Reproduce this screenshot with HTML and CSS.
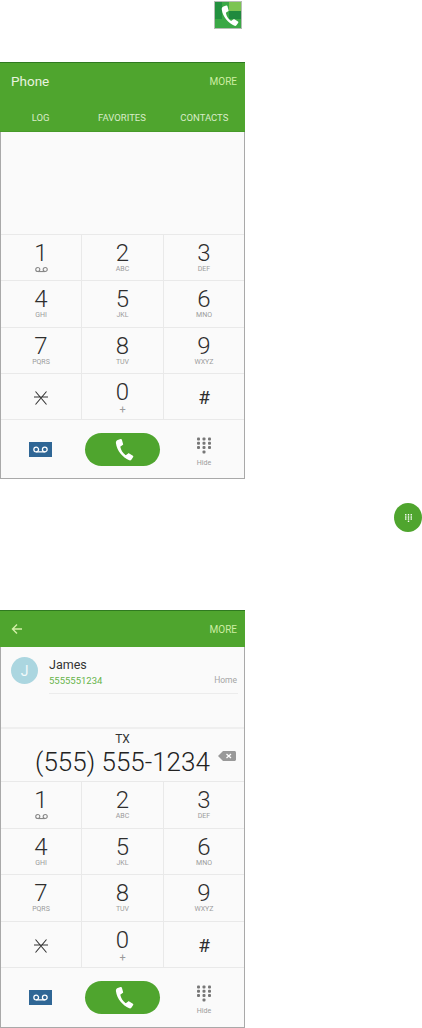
FILE: index.html
```html
<!DOCTYPE html>
<html lang="en">
<head>
    <meta charset="UTF-8">
    <meta name="viewport" content="width=device-width, initial-scale=1.0">
    <title>Phone</title>
    <link rel="stylesheet" href="styles.css">
</head>
<body>
    <svg class="defs" width="0" height="0" aria-hidden="true">
        <symbol id="handset" viewBox="0 0 24 24">
            <path d="M6.200 1.600 9.400 0.600c.7-.2 1.200.1 1.400.7l1.300 4.600c.2.600 0 1-.5 1.300L9.300 8.600c-.2.200-.3.400-.2.700.7 3.500 2.700 6.600 5.500 8.700.2.200.5.200.7 0l2-1.500c.5-.4 1-.4 1.500-.1l4 2.500c.5.300.6.800.3 1.300l-1.800 2.700c-.6.900-1.500 1.200-2.500.9C11.500 20.500 5.400 13.500 4.300 5.200 4.100 3.500 4.700 2.100 6.200 1.600Z"/>
        </symbol>
        <symbol id="pad" viewBox="0 0 14 16">
            <rect x="0" y="0" width="3" height="3" rx="1"/><rect x="5.500" y="0" width="3" height="3" rx="1"/><rect x="11" y="0" width="3" height="3" rx="1"/>
            <rect x="0" y="4.300" width="3" height="3" rx="1"/><rect x="5.500" y="4.300" width="3" height="3" rx="1"/><rect x="11" y="4.300" width="3" height="3" rx="1"/>
            <rect x="0" y="8.600" width="3" height="3" rx="1"/><rect x="5.500" y="8.600" width="3" height="3" rx="1"/><rect x="11" y="8.600" width="3" height="3" rx="1"/>
            <rect x="5.500" y="13" width="3" height="3" rx="1"/>
        </symbol>
        <symbol id="vm-small" viewBox="0 0 14 6">
            <circle cx="3" cy="3" r="2.200" fill="none" stroke="currentColor" stroke-width="1.200"/>
            <circle cx="11" cy="3" r="2.200" fill="none" stroke="currentColor" stroke-width="1.200"/>
            <path d="M3 5.200h8" fill="none" stroke="currentColor" stroke-width="1.200"/>
        </symbol>
        <symbol id="star" viewBox="0 0 14 14">
            <path d="M0 6h14M1.500 .5l11 13M12.500 .5l-11 13" fill="none" stroke="#333" stroke-width="1.100"/>
        </symbol>
    </svg>

    <div class="app-icon-row">
        <div class="app-icon">
            <div class="tile tile-a"></div>
            <div class="tile tile-b"></div>
            <div class="tile tile-c"></div>
            <svg class="app-handset"><use href="#handset"/></svg>
        </div>
    </div>

    <!-- Tela 1 -->
    <div class="phone phone-first">
        <div class="appbar appbar-tall">
            <div class="appbar-top">
                <span class="title">Phone</span>
                <span class="more">MORE</span>
            </div>
            <div class="tabs">
                <span>LOG</span>
                <span>FAVORITES</span>
                <span>CONTACTS</span>
            </div>
        </div>
        <div class="blank"></div>
        <div class="keypad">
            <div class="key"><span class="num">1</span><svg class="vm-small"><use href="#vm-small"/></svg></div>
            <div class="key"><span class="num">2</span><span class="sub">ABC</span></div>
            <div class="key"><span class="num">3</span><span class="sub">DEF</span></div>
            <div class="key"><span class="num">4</span><span class="sub">GHI</span></div>
            <div class="key"><span class="num">5</span><span class="sub">JKL</span></div>
            <div class="key"><span class="num">6</span><span class="sub">MNO</span></div>
            <div class="key"><span class="num">7</span><span class="sub">PQRS</span></div>
            <div class="key"><span class="num">8</span><span class="sub">TUV</span></div>
            <div class="key"><span class="num">9</span><span class="sub">WXYZ</span></div>
            <div class="key"><svg class="star"><use href="#star"/></svg></div>
            <div class="key"><span class="num">0</span><span class="sub plus">+</span></div>
            <div class="key"><span class="num hash">#</span></div>
        </div>
        <div class="actions">
            <div class="vm-btn"><svg class="vm-icon"><use href="#vm-small"/></svg></div>
            <div class="call-btn"><svg class="call-handset"><use href="#handset"/></svg></div>
            <div class="hide-btn"><svg class="pad-icon"><use href="#pad"/></svg><span>Hide</span></div>
        </div>
    </div>

    <div class="dial-icon-row">
        <div class="dial-icon"><svg class="dial-pad"><use href="#pad"/></svg></div>
    </div>

    <!-- Tela 2 -->
    <div class="phone phone-second">
        <div class="appbar appbar-short">
            <svg class="back" viewBox="0 0 12 12"><path d="M11 6H2M6 1.500 1.500 6 6 10.500" fill="none" stroke="#d3f0a8" stroke-width="1.400"/></svg>
            <span class="more">MORE</span>
        </div>
        <div class="contact-area">
            <div class="contact">
                <div class="avatar">J</div>
                <div class="contact-info">
                    <div class="contact-name">James</div>
                    <div class="contact-line">
                        <span class="contact-num">5555551234</span>
                        <span class="contact-type">Home</span>
                    </div>
                </div>
            </div>
        </div>
        <div class="number-area">
            <div class="region">TX</div>
            <div class="number">(555) 555-1234</div>
            <svg class="backspace" viewBox="0 0 18 10"><path d="M5 0h11.500c.8 0 1.500.7 1.500 1.500v7c0 .8-.7 1.500-1.500 1.500H5L0 5Z" fill="#999"/><path d="M8.500 3l4.500 4M13 3 8.500 7" stroke="#fff" stroke-width="1.300"/></svg>
        </div>
        <div class="keypad">
            <div class="key"><span class="num">1</span><svg class="vm-small"><use href="#vm-small"/></svg></div>
            <div class="key"><span class="num">2</span><span class="sub">ABC</span></div>
            <div class="key"><span class="num">3</span><span class="sub">DEF</span></div>
            <div class="key"><span class="num">4</span><span class="sub">GHI</span></div>
            <div class="key"><span class="num">5</span><span class="sub">JKL</span></div>
            <div class="key"><span class="num">6</span><span class="sub">MNO</span></div>
            <div class="key"><span class="num">7</span><span class="sub">PQRS</span></div>
            <div class="key"><span class="num">8</span><span class="sub">TUV</span></div>
            <div class="key"><span class="num">9</span><span class="sub">WXYZ</span></div>
            <div class="key"><svg class="star"><use href="#star"/></svg></div>
            <div class="key"><span class="num">0</span><span class="sub plus">+</span></div>
            <div class="key"><span class="num hash">#</span></div>
        </div>
        <div class="actions">
            <div class="vm-btn"><svg class="vm-icon"><use href="#vm-small"/></svg></div>
            <div class="call-btn"><svg class="call-handset"><use href="#handset"/></svg></div>
            <div class="hide-btn"><svg class="pad-icon"><use href="#pad"/></svg><span>Hide</span></div>
        </div>
    </div>
</body>
</html>
```

FILE: styles.css
```css
body {
    font-family: Roboto, "Liberation Sans", sans-serif;
    margin: 0;
    padding: 0;
    background-color: #fff;
    color: #333;
}

.defs {
    display: block;
    height: 0;
}

.app-icon-row {
    display: flex;
    padding: 1px 0 0 214px;
    height: 28px;
}

.app-icon {
    position: relative;
    box-sizing: border-box;
    width: 28px;
    height: 28px;
    background-color: #3aa845;
    border: 1px solid #b5bdb5;
    overflow: hidden;
}

.tile {
    position: absolute;
}

.tile-a {
    top: 0;
    right: 0;
    width: 12px;
    height: 9px;
    background-color: #7cc452;
}

.tile-b {
    top: 9px;
    right: 0;
    width: 12px;
    height: 8px;
    background-color: #1f8a3e;
}

.tile-c {
    top: 0;
    left: 0;
    width: 7px;
    height: 17px;
    background-color: #22913f;
}

.app-handset {
    position: absolute;
    left: 3px;
    top: 3px;
    width: 21px;
    height: 21px;
    fill: #fff;
}

.phone {
    box-sizing: border-box;
    width: 245px;
    background-color: #fafafa;
    border-left: 1px solid #a9a9a9;
    border-right: 1px solid #a9a9a9;
    border-bottom: 1px solid #a9a9a9;
    display: flex;
    flex-direction: column;
}

.phone-first {
    margin-top: 33px;
    height: 417px;
}

.phone-second {
    margin-top: 78px;
    height: 418px;
}

.appbar {
    background-color: #4fa52e;
    border-top: 1px solid #2f7a20;
    margin: 0 -1px;
    flex-shrink: 0;
}

.appbar-tall {
    height: 70px;
    box-sizing: border-box;
    border-bottom: 1px solid #479a2a;
}

.appbar-top {
    display: flex;
    justify-content: space-between;
    align-items: center;
    padding: 10px 8px 0 11px;
}

.appbar-short {
    height: 37px;
    box-sizing: border-box;
    display: flex;
    justify-content: space-between;
    align-items: center;
    padding: 0 8px 0 11px;
}

.title {
    font-size: 13.500px;
    color: #e8f3df;
}

.more {
    font-size: 10px;
    color: #cdeea3;
}

.tabs {
    display: flex;
    margin-top: 23px;
    font-size: 9.500px;
    color: #d9ecc9;
}

.tabs span {
    flex: 1;
    text-align: center;
}

.tabs span:last-child {
    padding-left: 1px;
}

.blank {
    flex: 1;
}

.keypad {
    display: grid;
    grid-template-columns: 81px 82px 1fr;
    grid-auto-rows: 46.250px;
    flex-shrink: 0;
    border-top: 1px solid #e9e9e9;
}

.phone-second .keypad {
    grid-auto-rows: 46.500px;
}

.key {
    display: flex;
    flex-direction: column;
    align-items: center;
    justify-content: flex-start;
    padding-top: 6px;
    box-sizing: border-box;
    border-right: 1px solid #e9e9e9;
    border-bottom: 1px solid #e9e9e9;
}

.key:nth-child(3n) {
    border-right: none;
}

.num {
    font-size: 24px;
    font-weight: 300;
    line-height: 24px;
    color: #2e2e2e;
}

.sub {
    font-size: 7px;
    line-height: 9px;
    color: #9a9a9a;
}

.plus {
    font-size: 11px;
    line-height: 8px;
    margin-top: 2px;
}

.hash {
    font-size: 19px;
    font-weight: 400;
    margin-top: 6px;
}

.vm-small {
    width: 13px;
    height: 7px;
    margin-top: 1px;
    color: #888;
}

.star {
    width: 14px;
    height: 14px;
    margin-top: 11px;
}

.actions {
    flex: 0 0 58px;
    display: grid;
    grid-template-columns: 81px 82px 1fr;
    align-items: center;
}

.phone-second .actions {
    flex: 1 1 auto;
}

.vm-btn {
    display: flex;
    justify-content: center;
    padding-right: 2px;
}

.vm-icon {
    box-sizing: border-box;
    width: 23px;
    height: 15px;
    padding: 3px 4px;
    background-color: #2f6695;
    color: #fff;
}

.call-btn {
    width: 75px;
    height: 33px;
    border-radius: 17px;
    background-color: #4fa52e;
    display: flex;
    justify-content: center;
    align-items: center;
    margin-left: 3px;
}

.call-handset {
    width: 22px;
    height: 25px;
    fill: #fff;
}

.hide-btn {
    display: flex;
    flex-direction: column;
    align-items: center;
    padding-top: 5px;
    font-size: 7px;
    color: #9a9a9a;
}

.pad-icon {
    width: 14px;
    height: 17px;
    fill: #777;
    margin-bottom: 5px;
}

.dial-icon-row {
    display: flex;
    justify-content: flex-end;
    margin-top: 24px;
}

.dial-icon {
    width: 28px;
    height: 29px;
    border-radius: 50%;
    background-color: #4fa52e;
    display: flex;
    justify-content: center;
    align-items: center;
}

.dial-pad {
    width: 7px;
    height: 10px;
    fill: #fff;
}

.back {
    width: 12px;
    height: 12px;
}

.contact-area {
    height: 80px;
    flex-shrink: 0;
}

.contact {
    display: flex;
    padding: 10px 6px 0 10px;
}

.avatar {
    width: 27px;
    height: 27px;
    border-radius: 50%;
    background-color: #abd6e0;
    color: #f2fafb;
    font-size: 14px;
    display: flex;
    justify-content: center;
    align-items: center;
    flex-shrink: 0;
}

.contact-info {
    flex: 1;
    margin-left: 11px;
    height: 36px;
    border-bottom: 1px solid #ececec;
}

.contact-name {
    font-size: 12.500px;
    line-height: 15px;
    color: #333;
}

.contact-line {
    display: flex;
    justify-content: space-between;
    padding-right: 1px;
    margin-top: 3px;
}

.contact-num {
    font-size: 9.500px;
    color: #66b44a;
}

.contact-type {
    font-size: 8.500px;
    color: #a5a5a5;
}

.number-area {
    position: relative;
    height: 54px;
    flex-shrink: 0;
    border-top: 2px solid #efefef;
    box-sizing: border-box;
    text-align: center;
}

.region {
    font-size: 12px;
    line-height: 14px;
    color: #333;
    margin-top: 3px;
}

.number {
    font-size: 26px;
    font-weight: 300;
    line-height: 30px;
    color: #222;
    margin-top: 1px;
}

.backspace {
    position: absolute;
    right: 8px;
    top: 22px;
    width: 18px;
    height: 10px;
}
```
